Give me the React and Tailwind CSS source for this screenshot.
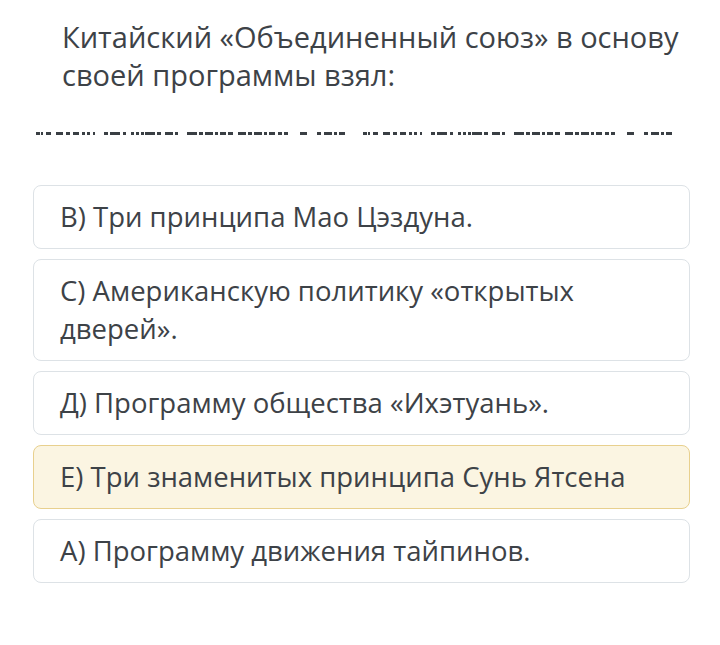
import React from 'react'

const dashes = [
  [36, 4], [41, 2], [46, 5], [56, 7], [66, 4], [73, 6], [82, 3], [87, 3], [93, 2],
  [104, 4], [110, 10], [123, 3], [131, 3], [136, 3], [141, 3], [145, 10], [157, 4], [165, 8], [175, 3],
  [187, 10], [199, 4], [205, 8], [215, 3], [220, 6], [228, 5], [238, 8], [248, 4], [254, 8], [264, 3], [269, 6], [278, 4], [284, 4],
  [300, 7], [317, 4], [324, 8], [334, 3], [339, 6],
]

const options = [
  { text: 'B) Три принципа Мао Цэздуна.' },
  { text: 'C) Американскую политику «открытых дверей».' },
  { text: 'Д) Программу общества «Ихэтуань».' },
  { text: 'E) Три знаменитых принципа Сунь Ятсена', selected: true },
  { text: 'A) Программу движения тайпинов.' },
]

const App = () => {
  return (
    <div className="w-[720px] h-[645px] bg-white text-[#3d4247] font-['Open_Sans',sans-serif]">
      {/* Question */}
      <div className="pl-[62px] pr-[20px] pt-[18px] text-[29px] leading-[38px]">
        Китайский «Объединенный союз» в основу своей программы взял:
      </div>

      {/* Blank placeholder */}
      <svg className="block mt-[38px]" width="720" height="4">
        {dashes.map(([x, w], i) => (
          <rect key={'a' + i} x={x} y="0" width={w} height="3" fill="#3a3f44" />
        ))}
        {dashes.map(([x, w], i) => (
          <rect key={'b' + i} x={x + 327} y="0" width={w} height="3" fill="#3a3f44" />
        ))}
      </svg>

      {/* Answers */}
      <div className="flex flex-col gap-[10px] mt-[49px] ml-[33px] w-[657px]">
        {options.map((o, i) => (
          <div
            key={i}
            className={
              o.selected
                ? 'rounded-lg border border-[#e8d08e] bg-[#fbf5e2] pl-[26px] pr-[30px] py-[12px] text-[27.5px] leading-[38px]'
                : 'rounded-lg border border-[#dde2e6] bg-white pl-[26px] pr-[30px] py-[12px] text-[27.5px] leading-[38px]'
            }
          >
            {o.text}
          </div>
        ))}
      </div>
    </div>
  )
}

export default App
